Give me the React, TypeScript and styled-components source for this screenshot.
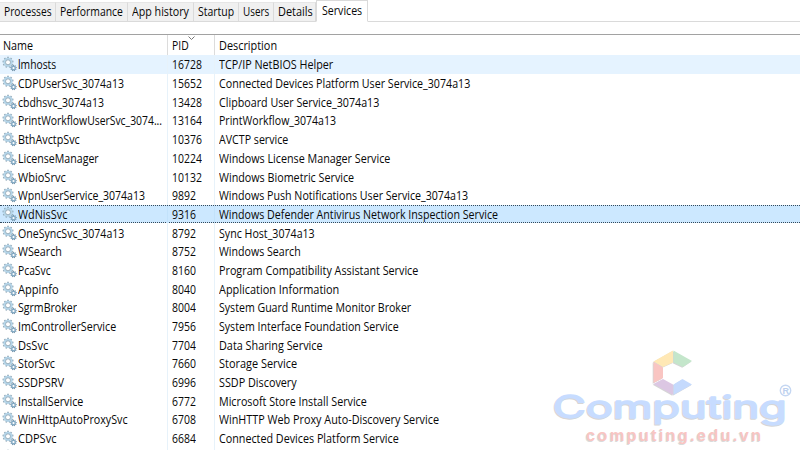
import React, { useLayoutEffect, useRef } from "react";
import styled, { createGlobalStyle } from "styled-components";

const GlobalStyle = createGlobalStyle`
  body { margin: 0; background: #fff; overflow: hidden; }
  * { box-sizing: border-box; }
`;

const Window = styled.main`
  position: relative;
  width: 800px;
  height: 450px;
  overflow: hidden;
  background: #fff;
  color: #080808;
  font: 12.2px/18px "Open Sans", "Noto Sans", sans-serif;
`;

const Tabs = styled.nav`
  display: flex;
  align-items: flex-end;
  height: 22px;
`;

const Tab = styled.div<{ $w: number; $active?: boolean }>`
  flex: none;
  width: ${(p) => p.$w}px;
  height: ${(p) => (p.$active ? 22 : 20)}px;
  padding-left: ${(p) => (p.$active ? 5 : 4)}px;
  padding-top: ${(p) => (p.$active ? 1 : 0)}px;
  background: ${(p) => (p.$active ? "#fff" : "#f0f0f0")};
  border: 1px solid #dadada;
  border-left-width: ${(p) => (p.$active ? 1 : 0)}px;
  border-bottom-color: ${(p) => (p.$active ? "#fff" : "#dadada")};
  border-top-color: ${(p) => (p.$active ? "#dadada" : "#e6e6e6")};
`;

const TabsRest = styled.div`
  flex: 1;
  border-bottom: 1px solid #dadada;
`;

const List = styled.section`
  margin-top: 12px;
  border-top: 1px solid #a2a2a2;
`;

const Row = styled.div<{ $state?: "hover" | "selected" }>`
  display: grid;
  grid-template-columns: 168px 47px 1fr;
  height: 18.7px;
  background: ${(p) => (p.$state === "hover" ? "#e5f3ff" : p.$state === "selected" ? "#cce8ff" : "#fff")};
  ${(p) => p.$state === "selected" && "border-top: 1px dotted #34495a; border-bottom: 1px dotted #34495a;"}
`;

const HeaderRow = styled(Row)`
  height: 20px;
`;

const Cell = styled.div<{ $pad: number; $line?: string; $top?: number }>`
  display: flex;
  align-items: center;
  min-width: 0;
  padding-left: ${(p) => p.$pad}px;
  padding-top: ${(p) => p.$top ?? 2}px;
  border-right: ${(p) => (p.$line ? `1px solid ${p.$line}` : "0")};
`;

const SortCell = styled(Cell)`
  position: relative;
`;

const SortArrow = styled.svg`
  position: absolute;
  left: 20px;
  top: 1px;
`;

const Gear = styled.svg`
  flex: none;
  margin: -2px 1px 0 0;
`;

const Label = styled.span`
  display: inline-block;
  white-space: pre;
  transform-origin: 0 50%;
`;

const Watermark = styled.svg`
  position: absolute;
  left: 540px;
  top: 340px;
  pointer-events: none;
`;

function Fit({ text, w }: { text: string; w: number }) {
  const ref = useRef<HTMLSpanElement>(null);
  useLayoutEffect(() => {
    const el = ref.current;
    if (el) el.style.transform = `scaleX(${w / el.offsetWidth})`;
  }, [text, w]);
  return <Label ref={ref}>{text}</Label>;
}

const teeth = [0, 40, 80, 120, 160, 200, 240, 280, 320];

function ServiceIcon() {
  return (
    <Gear width="15" height="16" viewBox="0 0 15 16">
      <g stroke="#93a9b8" strokeWidth="1.7">
        {teeth.map((a) => (
          <line key={a} x1="6" y1="0.8" x2="6" y2="2.6" transform={`rotate(${a} 6 6.3)`} />
        ))}
      </g>
      <circle cx="6" cy="6.3" r="3.6" fill="#fff" stroke="#b5d6ea" strokeWidth="2" />
      <circle cx="6" cy="6.3" r="2.5" fill="#fff" stroke="#7f9aac" strokeWidth="0.8" />
      <g stroke="#748ea1" strokeWidth="1.1">
        {teeth.map((a) => (
          <line key={a} x1="11.5" y1="8.8" x2="11.5" y2="10" transform={`rotate(${a} 11.5 12)`} />
        ))}
      </g>
      <circle cx="11.5" cy="12" r="1.8" fill="#fff" stroke="#84abc5" strokeWidth="1.4" />
    </Gear>
  );
}

const tabs: [string, number, number][] = [
  ["Processes", 56, 48],
  ["Performance", 72, 63],
  ["App history", 66, 57],
  ["Startup", 45, 36],
  ["Users", 35, 26],
  ["Details", 42, 35],
];

const services: [string, number, string, string, number][] = [
  ["lmhosts", 38, "16728", "TCP/IP NetBIOS Helper", 114],
  ["CDPUserSvc_3074a13", 106, "15652", "Connected Devices Platform User Service_3074a13", 251],
  ["cbdhsvc_3074a13", 86, "13428", "Clipboard User Service_3074a13", 160],
  ["PrintWorkflowUserSvc_3074...", 144, "13164", "PrintWorkflow_3074a13", 117],
  ["BthAvctpSvc", 62, "10376", "AVCTP service", 69],
  ["LicenseManager", 81, "10224", "Windows License Manager Service", 171],
  ["WbioSrvc", 48, "10132", "Windows Biometric Service", 135],
  ["WpnUserService_3074a13", 127, "9892", "Windows Push Notifications User Service_3074a13", 249],
  ["WdNisSvc", 49, "9316", "Windows Defender Antivirus Network Inspection Service", 279],
  ["OneSyncSvc_3074a13", 106, "8792", "Sync Host_3074a13", 96],
  ["WSearch", 44, "8752", "Windows Search", 82],
  ["PcaSvc", 33, "8160", "Program Compatibility Assistant Service", 199],
  ["Appinfo", 41, "8040", "Application Information", 120],
  ["SgrmBroker", 59, "8004", "System Guard Runtime Monitor Broker", 192],
  ["ImControllerService", 98, "7956", "System Interface Foundation Service", 180],
  ["DsSvc", 30, "7704", "Data Sharing Service", 104],
  ["StorSvc", 37, "7660", "Storage Service", 78],
  ["SSDPSRV", 46, "6996", "SSDP Discovery", 78],
  ["InstallService", 65, "6772", "Microsoft Store Install Service", 148],
  ["WinHttpAutoProxySvc", 110, "6708", "WinHTTP Web Proxy Auto-Discovery Service", 220],
  ["CDPSvc", 38, "6684", "Connected Devices Platform Service", 180],
];

const segments: [string, string][] = [
  ["M653.5 361.5 673 350.5V362.5L663 367Z", "#ffe8b5"],
  ["M673.5 350.5 692 361 683 367 673.5 362.5Z", "#c4e6cb"],
  ["M653.5 362 663 367.5V378L653.5 383Z", "#f9c5c2"],
  ["M653.5 384 663 379 673 384.5V395Z", "#dcc7e3"],
  ["M673.5 384.5 682.5 379 692 384.5 673.5 395Z", "#c5dafd"],
];

function Logo() {
  return (
    <Watermark width="260" height="110" viewBox="540 340 260 110">
      <g transform="translate(-0.8 0.8)" fill="#d5d5d5">
        {segments.map(([d]) => (
          <path key={d} d={d} />
        ))}
      </g>
      {segments.map(([d, fill]) => (
        <path key={d} d={d} fill={fill} />
      ))}
      <g fontFamily="Inter" fontSize="31" fontWeight="400" strokeWidth="1.3" strokeLinejoin="round">
        <text x="552" y="418.8" fill="#d6d6d6" stroke="#d6d6d6" textLength="234" lengthAdjust="spacingAndGlyphs">Computing</text>
        <text x="553" y="418" fill="#c7dcff" stroke="#c7dcff" textLength="234" lengthAdjust="spacingAndGlyphs">Computing</text>
      </g>
      <g fontFamily="Liberation Sans" fontSize="16.5" fontWeight="700">
        <text x="585" y="441.7" fill="#dadada" textLength="175" lengthAdjust="spacing">computing.edu.vn</text>
        <text x="586" y="441" fill="#f9c5c2" textLength="175" lengthAdjust="spacing">computing.edu.vn</text>
      </g>
      <circle cx="785.5" cy="390.5" r="5.2" fill="none" stroke="#c5d7f2" strokeWidth="1.4" />
      <text x="782.4" y="393.7" fontFamily="Liberation Sans" fontSize="9" fontWeight="700" fill="#bcd0ee">R</text>
    </Watermark>
  );
}

export default function App() {
  return (
    <>
      <GlobalStyle />
      <Window>
        <Tabs>
          {tabs.map(([name, width, textWidth]) => (
            <Tab key={name} $w={width}>
              <Fit text={name} w={textWidth} />
            </Tab>
          ))}
          <Tab $w={52} $active>
            <Fit text="Services" w={40} />
          </Tab>
          <TabsRest />
        </Tabs>
        <List>
          <HeaderRow>
            <Cell $pad={3} $line="#dcdcdc">
              <Fit text="Name" w={30} />
            </Cell>
            <SortCell $pad={4} $line="#dcdcdc">
              <Fit text="PID" w={17} />
              <SortArrow width="7" height="5" viewBox="0 0 7 5">
                <path d="M0.5 0.5 3.5 3.5 6.5 0.5" fill="none" stroke="#777" />
              </SortArrow>
            </SortCell>
            <Cell $pad={4}>
              <Fit text="Description" w={58} />
            </Cell>
          </HeaderRow>
          {services.map(([name, nameWidth, pid, description, descriptionWidth], i) => {
            const selected = i === 8;
            const line = selected ? "#c2e2fb" : "#e7f2fa";
            const top = selected ? 0 : 1.4;
            return (
              <Row key={name} $state={i === 0 ? "hover" : selected ? "selected" : undefined}>
                <Cell $pad={2} $line={line} $top={top}>
                  <ServiceIcon />
                  <Fit text={name} w={nameWidth} />
                </Cell>
                <Cell $pad={4} $line={line} $top={top}>
                  <Fit text={pid} w={pid.length * 6} />
                </Cell>
                <Cell $pad={4} $top={top}>
                  <Fit text={description} w={descriptionWidth} />
                </Cell>
              </Row>
            );
          })}
          <Row>
            <Cell $pad={2} $line="#e7f2fa">
              <ServiceIcon />
            </Cell>
            <Cell $pad={4} $line="#e7f2fa" />
            <Cell $pad={4} />
          </Row>
        </List>
        <Logo />
      </Window>
    </>
  );
}
